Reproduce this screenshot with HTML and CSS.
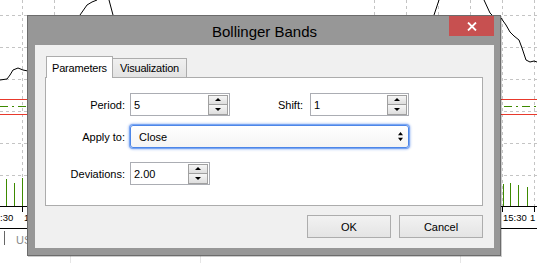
FILE: index.html
```html
<!DOCTYPE html>
<html lang="en">
<head>
    <meta charset="UTF-8">
    <meta name="viewport" content="width=device-width, initial-scale=1.0">
    <title>Bollinger Bands</title>
    <link rel="stylesheet" href="styles.css">
</head>
<body>

    <div class="screen">
        <!-- chart behind the dialog -->
        <svg class="chart" width="537" height="263" viewBox="0 0 537 263">
            <g class="grid">
                <path d="M22.5 0V206M54.5 0V206M374.5 0V206M406.5 0V206M438.5 0V206M470.5 0V206M502.5 0V206M534.5 0V206"/>
                <path d="M0 15.5H537M0 47.5H537M0 79.5H537M0 111.5H537M0 143.5H537M0 175.5H537"/>
            </g>
            <path class="band" d="M0 99.5H537M0 114.5H537"/>
            <path class="middle" d="M0 106.5H537"/>
            <polyline class="price" points="0,80 7,79 10,75 13,70 18,68 23,70 28,71"/>
            <polyline class="price" points="80,15 87,5 92,2 97,0"/>
            <polyline class="price" points="109,0 113,15"/>
            <polyline class="price" points="434,15 439,0"/>
            <polyline class="price" points="484,0 490,13 493,16"/>
            <polyline class="price" points="501,18 506,25 510,32 514,36 519,40 522,48 526,60 530,62 534,61 537,62"/>
            <path class="volume" d="M6.5 179V206M14.5 183V206M22.5 178V206M503.5 184V206M510.5 183V206M518.5 185V206M527.5 187V206"/>
            <path class="axis" d="M0 206.5H537M22.5 207V212M502.5 207V212M534.5 207V212M0 228.5H537"/>
            <text class="time" x="0" y="221">:30</text>
            <text class="time" x="24" y="221">15:30</text>
            <text class="time" x="503" y="221">15:30</text>
            <text class="time" x="530" y="221">1</text>
            <path class="sep" d="M4.5 231V245"/>
            <text class="tab-name" x="16" y="244">USDJPY</text>
            <path class="col" d="M70.5 248V263M200.5 248V263M460.5 248V263"/>
        </svg>

        <div class="dialog">
            <div class="titlebar">
                <span class="title">Bollinger Bands</span>
                <button class="close">
                    <svg width="10" height="9" viewBox="0 0 10 9"><path d="M1 0.5L9 8.5M9 0.5L1 8.5" stroke="#fff" stroke-width="1.8"/></svg>
                </button>
            </div>

            <div class="dialog-body">
                <div class="tabs">
                    <div class="tab active">Parameters</div>
                    <div class="tab">Visualization</div>
                </div>

                <div class="panel">
                    <div class="row">
                        <label class="lbl">Period:</label>
                        <div class="field w100">
                            <span class="value">5</span>
                            <span class="spin"><span class="up"></span><span class="down"></span></span>
                        </div>
                        <label class="lbl lbl-shift">Shift:</label>
                        <div class="field w99">
                            <span class="value">1</span>
                            <span class="spin"><span class="up"></span><span class="down"></span></span>
                        </div>
                    </div>
                    <div class="row">
                        <label class="lbl">Apply to:</label>
                        <div class="select">
                            <span class="value">Close</span>
                            <svg width="5" height="9" viewBox="0 0 5 9"><path d="M2.5 0L5 3.2H0zM2.5 9L5 5.8H0z" fill="#000"/></svg>
                        </div>
                    </div>
                    <div class="row row-dev">
                        <label class="lbl">Deviations:</label>
                        <div class="field w80">
                            <span class="value">2.00</span>
                            <span class="spin"><span class="up"></span><span class="down"></span></span>
                        </div>
                    </div>
                </div>

                <div class="buttons">
                    <button class="btn">OK</button>
                    <button class="btn">Cancel</button>
                </div>
            </div>
        </div>
    </div>

</body>
</html>
```

FILE: styles.css
```css
body {
    margin: 0;
    font-family: 'Liberation Sans', Arial, sans-serif;
    color: #000;
}
.screen {
    position: relative;
    width: 537px;
    height: 263px;
    overflow: hidden;
    background-color: #fff;
}
.chart {
    position: absolute;
    left: 0;
    top: 0;
}
.chart path,
.chart polyline {
    fill: none;
}
.grid path {
    stroke: #c4c4c4;
    stroke-dasharray: 3 3;
}
.band {
    stroke: #e8392c;
}
.middle {
    stroke: #3d8a00;
    stroke-dasharray: 8 4 2 4;
}
.price {
    stroke: #000;
}
.volume {
    stroke: #3d8a00;
}
.axis {
    stroke: #000;
}
.sep {
    stroke: #666;
}
.col {
    stroke: #e6e6e6;
}
.time {
    font-size: 9.5px;
    fill: #000;
}
.tab-name {
    font-size: 11px;
    fill: #8a8a8a;
}

/* dialog window */
.dialog {
    position: absolute;
    left: 27px;
    top: 15px;
    width: 474px;
    height: 241px;
    box-sizing: border-box;
    border: 1px solid #6c6c6c;
    background-color: #979797;
    padding: 0 6px 7px 7px;
    display: flex;
    flex-direction: column;
    box-shadow: 1px 1px 0 rgba(0, 0, 0, 0.2);
}
.titlebar {
    height: 29px;
    flex: none;
    display: grid;
    grid-template-columns: 1fr auto 1fr;
}
.title {
    grid-column: 2;
    align-self: center;
    font-size: 15px;
    margin-top: 1px;
}
.close {
    grid-column: 3;
    justify-self: end;
    width: 45px;
    height: 20px;
    padding: 0;
    border: none;
    background-color: #c75050;
    display: flex;
    align-items: center;
    justify-content: center;
}
.dialog-body {
    flex: 1;
    background-color: #f0f0f0;
    padding: 11px 11px 10px 10px;
    font-size: 11px;
}

/* tabs */
.tabs {
    display: flex;
    align-items: flex-end;
    height: 21px;
    margin-left: 1px;
}
.tab {
    box-sizing: border-box;
    width: 74px;
    height: 19px;
    border: 1px solid #acacac;
    border-bottom: none;
    border-left: none;
    background: linear-gradient(#f0f0f0, #e3e3e3);
    display: flex;
    align-items: center;
    justify-content: center;
    letter-spacing: -0.2px;
}
.tab.active {
    width: 67px;
    height: 22px;
    margin-bottom: -1px;
    border-left: 1px solid #acacac;
    background: #fff;
    position: relative;
    z-index: 1;
}

.panel {
    box-sizing: border-box;
    height: 129px;
    border: 1px solid #acacac;
    background-color: #fff;
    padding-top: 15px;
}
.row {
    display: flex;
    align-items: center;
    height: 23px;
}
.row + .row {
    margin-top: 9px;
}
.row.row-dev {
    margin-top: 14px;
}
.lbl {
    width: 84px;
    box-sizing: border-box;
    padding-right: 5px;
    text-align: right;
}
.lbl.lbl-shift {
    width: 80px;
    padding-right: 7px;
}

/* inputs with spinner */
.field {
    box-sizing: border-box;
    height: 23px;
    border: 1px solid #abadb3;
    background-color: #fff;
    display: flex;
    align-items: center;
    padding-left: 3px;
}
.w100 { width: 100px; }
.w99 { width: 99px; }
.w80 { width: 80px; }
.value {
    flex: 1;
}
.spin {
    width: 20px;
    height: 20px;
    margin-right: 1px;
    display: flex;
    flex-direction: column;
}
.spin span {
    flex: 1;
    box-sizing: border-box;
    border: 1px solid #a0a0a0;
    background: linear-gradient(#f6f6f6, #dedede);
    display: flex;
    align-items: center;
    justify-content: center;
}
.spin .down {
    border-top: none;
}
.spin .up::before,
.spin .down::before {
    content: '';
    border-left: 3px solid transparent;
    border-right: 3px solid transparent;
}
.spin .up::before {
    border-bottom: 3px solid #000;
}
.spin .down::before {
    border-top: 3px solid #000;
}

/* focused select */
.select {
    box-sizing: border-box;
    width: 279px;
    height: 23px;
    border: 1px solid #4d86e8;
    border-radius: 3px;
    box-shadow: 0 0 0 1px #7aa6f2, 0 0 2px 2px rgba(120, 160, 240, 0.45);
    background: linear-gradient(#fff, #f4f4f4);
    display: flex;
    align-items: center;
    padding: 0 5px 0 8px;
}

/* bottom buttons */
.buttons {
    display: flex;
    justify-content: flex-end;
    gap: 8px;
    margin-top: 9px;
}
.btn {
    width: 84px;
    height: 23px;
    border: 1px solid #adadad;
    background: linear-gradient(#f2f2f2, #e4e4e4);
    font-family: 'Liberation Sans', Arial, sans-serif;
    font-size: 11px;
    color: #000;
    padding: 0;
}
```
